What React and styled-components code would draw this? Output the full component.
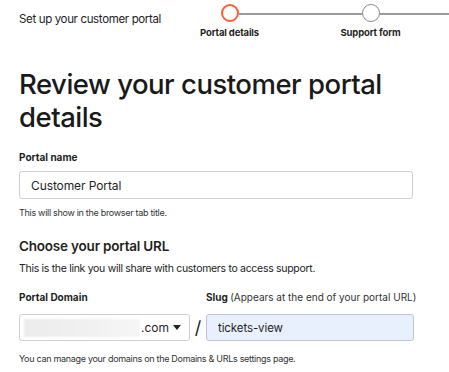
import React from "react";
import styled, { createGlobalStyle } from "styled-components";

const GlobalStyle = createGlobalStyle`
  html, body {
    margin: 0;
    padding: 0;
    background: #ffffff;
  }
  body {
    font-family: Inter, "Noto Sans", Arial, sans-serif;
    color: #1f1f1f;
    overflow: hidden;
  }
`;

const Page = styled.div`
  width: 449px;
  height: 372px;
  overflow: hidden;
  padding: 0 0 0 19px;
  box-sizing: border-box;
`;

const Header = styled.div`
  display: flex;
  align-items: flex-start;
  height: 68px;
`;

const SetupTitle = styled.div`
  font-size: 11.5px;
  letter-spacing: -0.35px;
  line-height: 16px;
  margin-top: 11px;
  width: 140px;
  flex-shrink: 0;
  white-space: nowrap;
  color: #222;
`;

const Stepper = styled.div`
  display: flex;
  flex-shrink: 0;
`;

const Step = styled.div`
  position: relative;
  width: 141px;
  display: flex;
  flex-direction: column;
  align-items: center;
  padding-top: 4px;

  &::before,
  &::after {
    content: "";
    position: absolute;
    top: 13px;
    height: 2px;
    background: #9a9a9a;
    width: calc(50% - 9px);
  }
  &::before {
    left: 0;
    display: ${(p) => (p.first ? "none" : "block")};
  }
  &::after {
    right: 0;
  }
`;

const Circle = styled.div`
  width: 18px;
  height: 18px;
  box-sizing: border-box;
  border-radius: 50%;
  background: #fff;
  border: ${(p) => (p.active ? "2px solid #ff5c35" : "1.5px solid #8a8a8a")};
`;

const StepLabel = styled.div`
  margin-top: 4px;
  font-size: 9.5px;
  letter-spacing: -0.15px;
  font-weight: 700;
  line-height: 14px;
  color: #1f1f1f;
  white-space: nowrap;
`;

const Title = styled.h1`
  margin: 0;
  font-size: 27.5px;
  line-height: 33px;
  font-weight: 500;
  letter-spacing: -0.5px;
  color: #1a1a1a;
  width: 400px;
`;

const Label = styled.div`
  font-size: 10px;
  font-weight: 700;
  line-height: 14px;
  color: #1f1f1f;
  white-space: nowrap;
  margin-top: ${(p) => p.mt || 0}px;
  span {
    font-weight: 400;
    color: #333;
  }
`;

const TextInput = styled.div`
  box-sizing: border-box;
  width: ${(p) => p.w}px;
  height: ${(p) => p.h || 28}px;
  border: 1px solid ${(p) => (p.filled ? "#b7c6d9" : "#cfcfcf")};
  background: ${(p) => (p.filled ? "#e8f0fe" : "#fff")};
  border-radius: 3px;
  display: flex;
  align-items: center;
  padding: 0 11px;
  font-size: ${(p) => (p.filled ? 11.5 : 12)}px;
  letter-spacing: -0.1px;
  color: #1f1f1f;
`;

const Help = styled.div`
  font-size: 9px;
  letter-spacing: -0.3px;
  line-height: 12px;
  color: #333;
  margin-top: ${(p) => p.mt || 0}px;
`;

const SectionTitle = styled.h2`
  margin: 0;
  margin-top: 17px;
  font-size: 13.5px;
  letter-spacing: -0.2px;
  line-height: 20px;
  font-weight: 600;
  color: #1f1f1f;
`;

const Sub = styled.div`
  font-size: 10.5px;
  letter-spacing: -0.3px;
  line-height: 15px;
  color: #222;
  margin-top: 5px;
`;

const UrlRow = styled.div`
  display: flex;
  align-items: flex-start;
  margin-top: 14px;
`;

const Field = styled.div`
  display: flex;
  flex-direction: column;
  gap: 10px;
`;

const Select = styled.div`
  box-sizing: border-box;
  width: 171px;
  height: 27px;
  border: 1px solid #cfcfcf;
  border-radius: 3px;
  display: flex;
  align-items: center;
  padding: 0 8px 0 4px;
  font-size: 12px;
  color: #1f1f1f;
`;

const Blur = styled.div`
  width: 117px;
  height: 18px;
  background: linear-gradient(90deg, #ececec, #f1f1f1 60%, #f6f6f6);
  filter: blur(1px);
  margin-right: 1px;
`;

const Caret = styled.svg`
  margin-left: 4px;
`;

const Slash = styled.div`
  width: 16px;
  margin-top: 24px;
  text-align: center;
  font-size: 18px;
  line-height: 27px;
  color: #222;
`;

export default function App() {
  return (
    <>
      <GlobalStyle />
      <Page>
        <Header>
          <SetupTitle>Set up your customer portal</SetupTitle>
          <Stepper>
            <Step first>
              <Circle active />
              <StepLabel>Portal details</StepLabel>
            </Step>
            <Step>
              <Circle />
              <StepLabel>Support form</StepLabel>
            </Step>
            <Step>
              <Circle />
            </Step>
          </Stepper>
        </Header>

        <Title>Review your customer portal details</Title>

        <Label mt={16}>Portal name</Label>
        <div style={{ marginTop: 7 }}>
          <TextInput w={394}>Customer Portal</TextInput>
        </div>
        <Help mt={8}>This will show in the browser tab title.</Help>

        <SectionTitle>Choose your portal URL</SectionTitle>
        <Sub>This is the link you will share with customers to access support.</Sub>

        <UrlRow>
          <Field>
            <Label>Portal Domain</Label>
            <Select>
              <Blur />
              .com
              <Caret width="8" height="5" viewBox="0 0 8 5">
                <path d="M0 0 H8 L4 5 Z" fill="#222" />
              </Caret>
            </Select>
          </Field>
          <Slash>/</Slash>
          <Field>
            <Label>
              Slug <span>(Appears at the end of your portal URL)</span>
            </Label>
            <TextInput w={208} h={27} filled>
              tickets-view
            </TextInput>
          </Field>
        </UrlRow>
        <Help mt={12}>
          You can manage your domains on the Domains &amp; URLs settings page.
        </Help>
      </Page>
    </>
  );
}
